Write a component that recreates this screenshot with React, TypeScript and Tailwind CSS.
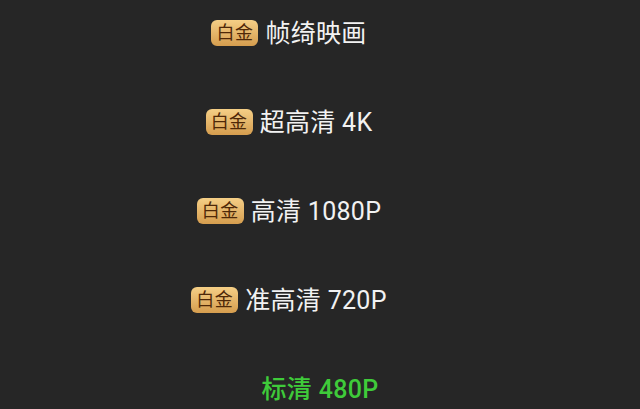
import React from "react";

const rows = [
  { label: "帧绮映画", vip: true },
  { label: "超高清 4K", vip: true },
  { label: "高清 1080P", vip: true },
  { label: "准高清 720P", vip: true },
  { label: "标清 480P", vip: false },
];

const App: React.FC = () => {
  return (
    <div
      className="w-[640px] h-[409px] bg-[#262626] overflow-hidden flex flex-col items-center pt-[16px] gap-[55px]"
      style={{ fontFamily: 'Roboto, "Noto Sans CJK SC", "Noto Sans", sans-serif' }}
    >
      {rows.map((r) => (
        <div key={r.label} className={`flex justify-center w-full ${r.vip ? "pr-[8px]" : "pl-[0px]"}`}>
          <div className="relative h-[34px] flex items-center">
            {r.vip && (
              <span className="absolute right-full mr-[7px] top-1/2 -translate-y-1/2 w-[47px] h-[26px] rounded-[6px] bg-gradient-to-b from-[#f5cf86] to-[#d59d4e] text-[#4e2808] text-[18px] leading-none flex items-center justify-center tracking-[0.5px]">
                白金
              </span>
            )}
            <span
              className={`text-[25px] leading-none whitespace-nowrap tracking-[0.3px] ${
                r.vip ? "text-[#f2f2f2]" : "text-[#3fcb3a] font-medium"
              }`}
            >
              {r.label}
            </span>
          </div>
        </div>
      ))}
    </div>
  );
};

export default App;
